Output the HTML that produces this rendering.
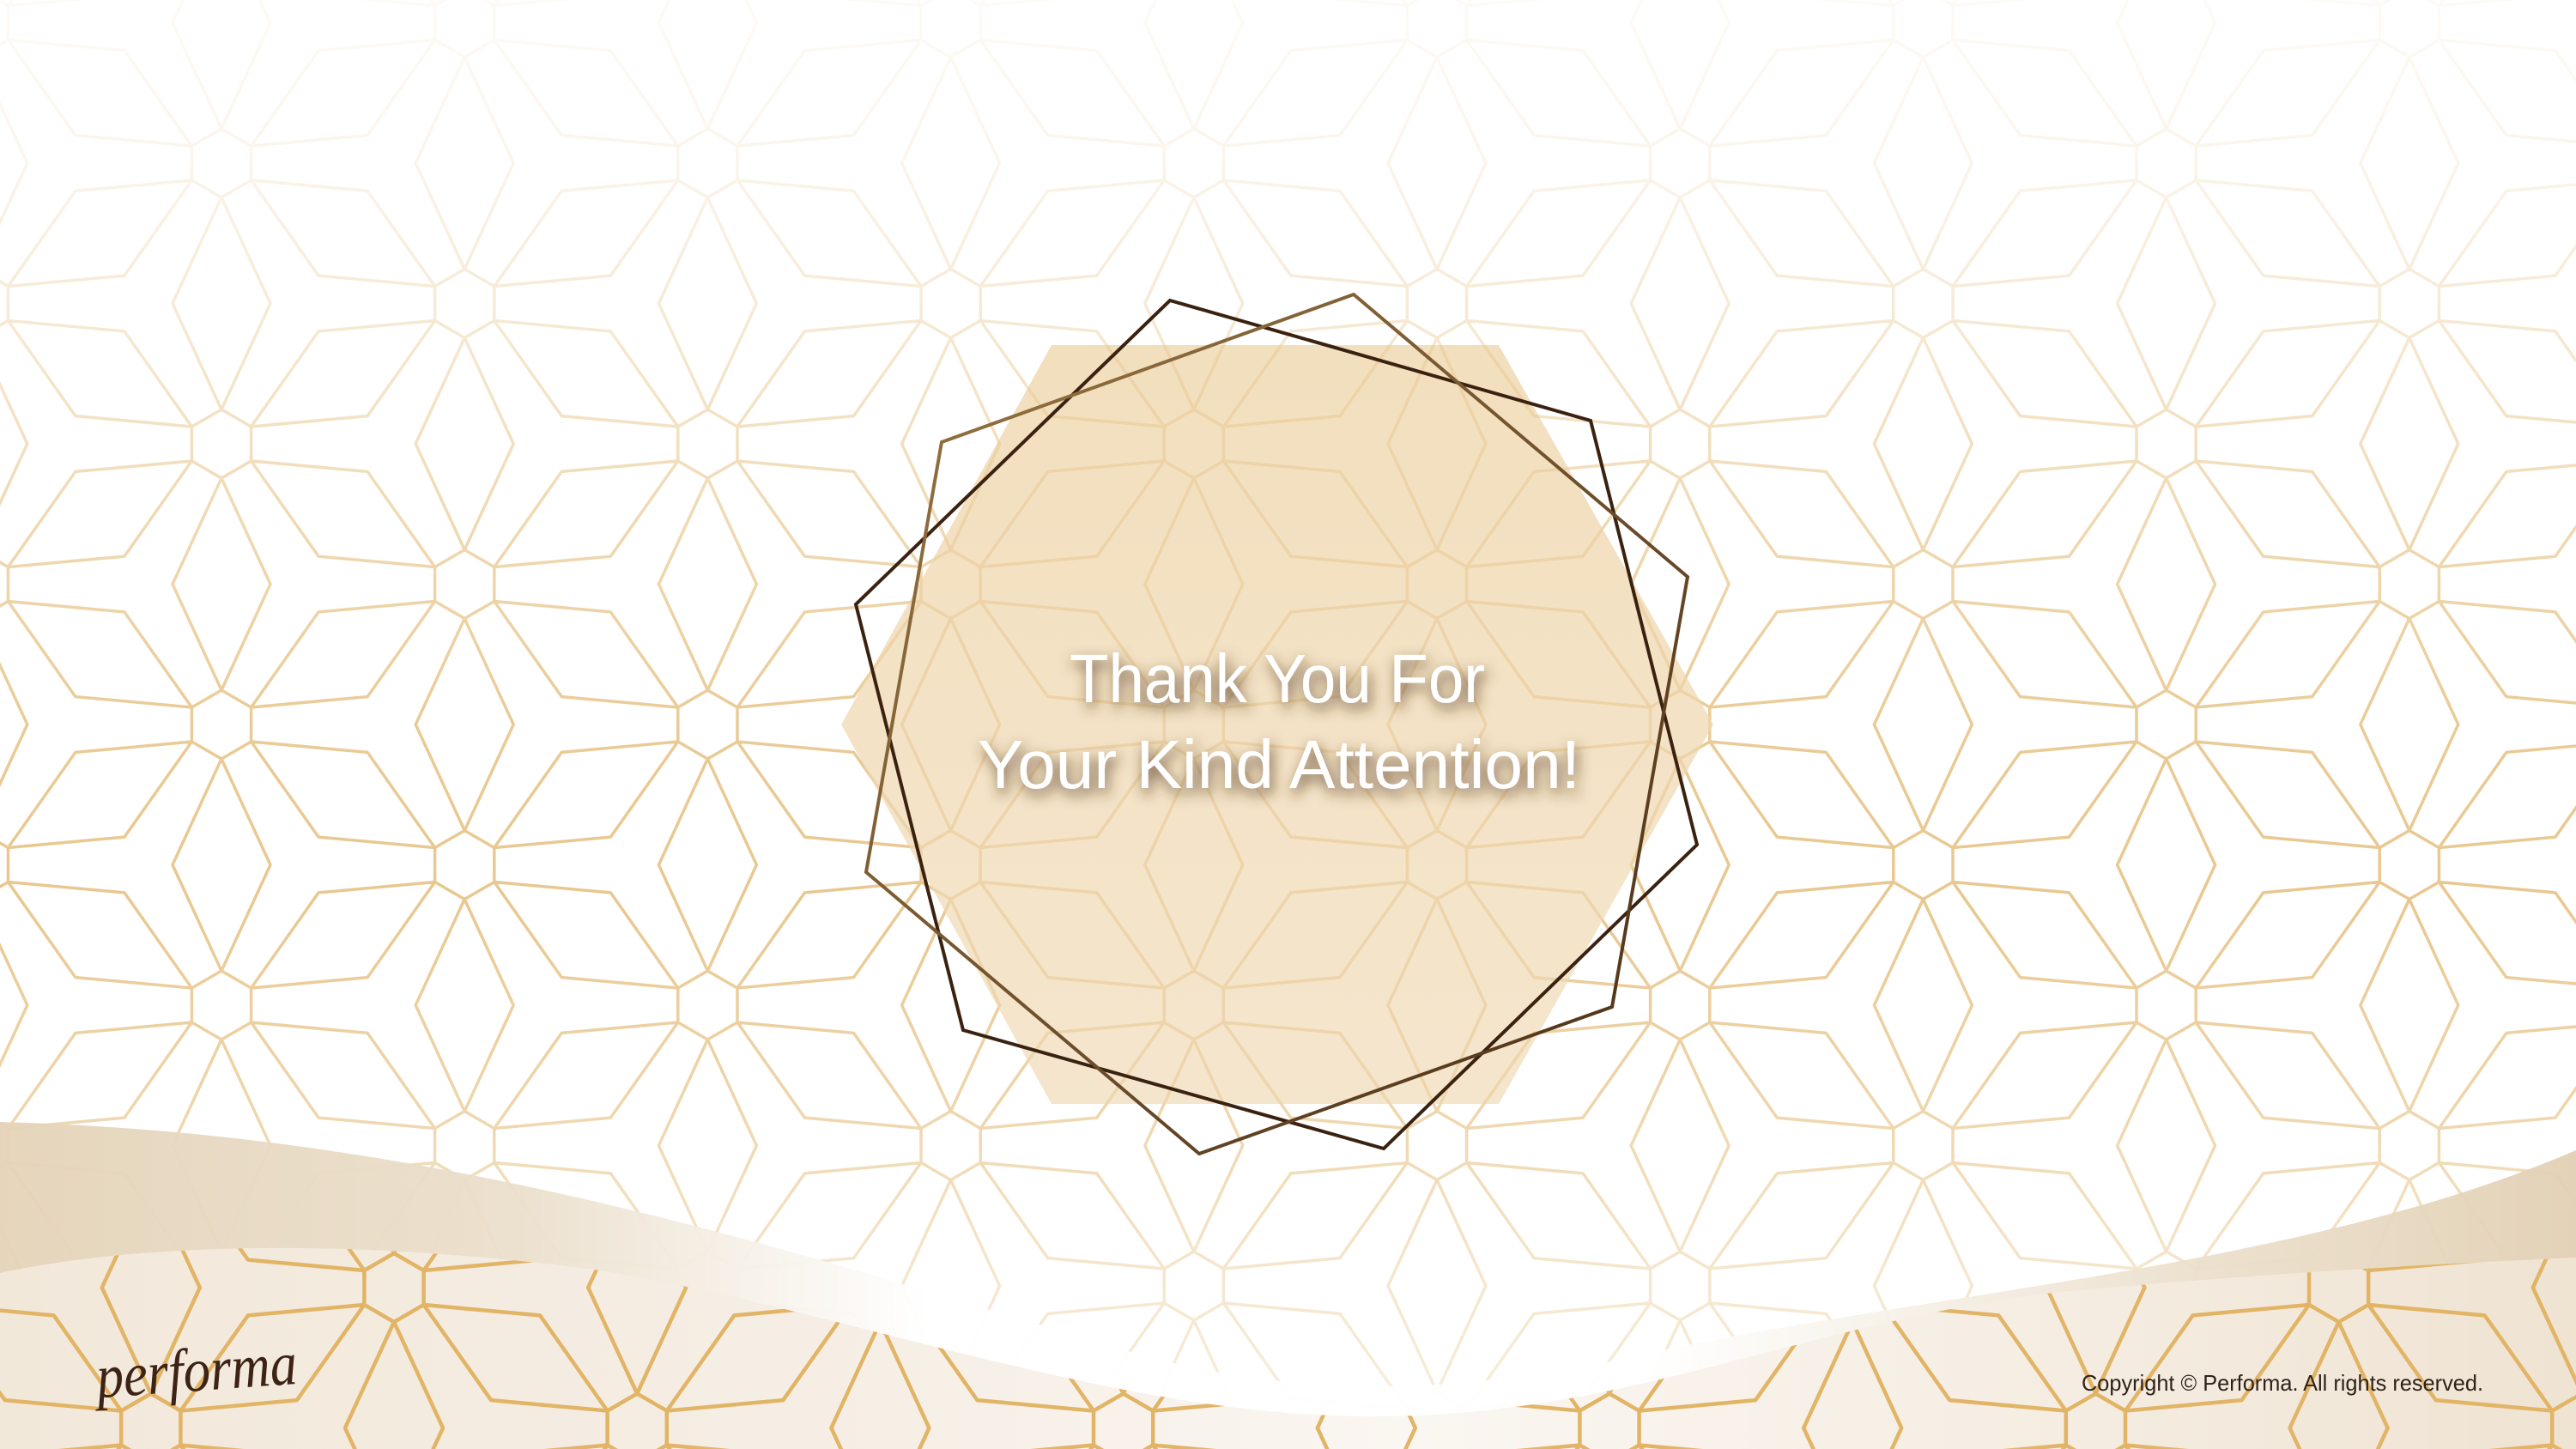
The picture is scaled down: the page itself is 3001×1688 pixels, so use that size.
<!DOCTYPE html>
<html><head><meta charset="utf-8">
<style>
html,body{margin:0;padding:0;background:#fff;overflow:hidden;width:3001px;height:1688px;}
body{position:relative;}
svg{position:absolute;left:0;top:0;display:block;}
</style></head>
<body>
<svg id="s" width="3001" height="1688" viewBox="0 0 3001 1688" xmlns="http://www.w3.org/2000/svg">
<defs>
  <linearGradient id="wv" x1="0" y1="0" x2="0" y2="1688" gradientUnits="userSpaceOnUse">
    <stop offset="0" stop-color="#fff" stop-opacity="0.93"/>
    <stop offset="0.1" stop-color="#fff" stop-opacity="0.85"/>
    <stop offset="0.22" stop-color="#fff" stop-opacity="0.65"/>
    <stop offset="0.35" stop-color="#fff" stop-opacity="0.4"/>
    <stop offset="0.5" stop-color="#fff" stop-opacity="0.15"/>
    <stop offset="0.62" stop-color="#fff" stop-opacity="0.1"/>
    <stop offset="0.75" stop-color="#fff" stop-opacity="0.3"/>
    <stop offset="0.88" stop-color="#fff" stop-opacity="0.6"/>
    <stop offset="1" stop-color="#fff" stop-opacity="0.75"/>
  </linearGradient>
  <linearGradient id="hexFill" x1="0" y1="0" x2="0" y2="1">
    <stop offset="0" stop-color="#f1dcb8" stop-opacity="0.92"/>
    <stop offset="1" stop-color="#f3e2c6" stop-opacity="0.88"/>
  </linearGradient>
  <linearGradient id="p2g" x1="0" y1="0" x2="1" y2="1">
    <stop offset="0" stop-color="#9a7744"/>
    <stop offset="1" stop-color="#4a2e16"/>
  </linearGradient>
  <linearGradient id="backG" x1="0" y1="0" x2="3001" y2="0" gradientUnits="userSpaceOnUse">
    <stop offset="0" stop-color="#e4d3b8"/>
    <stop offset="0.2" stop-color="#ebdfcc"/>
    <stop offset="0.36" stop-color="#ffffff"/>
    <stop offset="0.64" stop-color="#ffffff"/>
    <stop offset="0.85" stop-color="#ece0cd"/>
    <stop offset="1" stop-color="#e2d0b4"/>
  </linearGradient>
  <linearGradient id="frontG" x1="0" y1="0" x2="3001" y2="0" gradientUnits="userSpaceOnUse">
    <stop offset="0" stop-color="#f2e8da"/>
    <stop offset="0.35" stop-color="#f6efe6"/>
    <stop offset="0.55" stop-color="#faf6f1"/>
    <stop offset="0.8" stop-color="#f5ede2"/>
    <stop offset="1" stop-color="#efe3d2"/>
  </linearGradient>
  <clipPath id="frontClip"><path d="M0,1483 C150,1450 400,1440 700,1480 C1000,1530 1300,1650 1600,1650 C1900,1650 2100,1540 2400,1505 C2700,1478 2900,1470 3001,1465 L3001,1688 L0,1688 Z"/></clipPath>
  <clipPath id="hc"><polygon points="1225,402 1746,402 1996,844 1746,1286 1225,1286 980,844"/></clipPath>
  <filter id="tsh" x="-20%" y="-50%" width="140%" height="200%">
    <feGaussianBlur in="SourceAlpha" stdDeviation="8"/>
    <feOffset dx="3" dy="7" result="b"/>
    <feFlood flood-color="#4e3218" flood-opacity="0.85"/>
    <feComposite in2="b" operator="in"/>
    <feMerge><feMergeNode/><feMergeNode in="SourceGraphic"/></feMerge>
  </filter>
</defs>
<rect width="3001" height="1688" fill="#fff"/>
<path id="pat1" fill="none" stroke="#e6c284" stroke-width="3.5" stroke-linejoin="round"/>
<rect width="3001" height="1688" fill="url(#wv)"/>

<polygon points="1225,402 1746,402 1996,844 1746,1286 1225,1286 980,844" fill="url(#hexFill)"/>
<g clip-path="url(#hc)" opacity="0.3"><path id="pat1b" fill="none" stroke="#e3bd7c" stroke-width="3.5"/></g>

<polygon points="1363,350 1853,490 1977,984 1612,1338 1122,1200 997,704" fill="none" stroke="#3a2110" stroke-width="4"/>
<polygon points="1577,343 1966,672 1878,1173 1397,1344 1009,1016 1097,515" fill="none" stroke="url(#p2g)" stroke-width="4"/>

<g filter="url(#tsh)" font-family="'Liberation Sans',sans-serif" fill="#ffffff" text-anchor="middle">
  <text x="1488" y="818" font-size="80" textLength="484" lengthAdjust="spacingAndGlyphs">Thank You For</text>
  <text x="1490" y="918" font-size="80" textLength="702" lengthAdjust="spacingAndGlyphs">Your Kind Attention!</text>
</g>

<path d="M0,1307 C500,1320 900,1450 1300,1570 C1500,1630 1700,1630 1950,1570 C2300,1500 2700,1470 3001,1340 L3001,1688 L0,1688 Z" fill="url(#backG)" opacity="0.95"/>
<path d="M0,1483 C150,1450 400,1440 700,1480 C1000,1530 1300,1650 1600,1650 C1900,1650 2100,1540 2400,1505 C2700,1478 2900,1470 3001,1465 L3001,1688 L0,1688 Z" fill="url(#frontG)"/>
<g clip-path="url(#frontClip)"><path id="pat2" fill="none" stroke="#e2b466" stroke-width="4.5" stroke-linejoin="round"/></g>

<text x="113" y="1620" font-family="'Liberation Serif',serif" font-style="italic" font-size="72" fill="#3d2316" textLength="234" lengthAdjust="spacingAndGlyphs" transform="rotate(-4 230 1610)">performa</text>
<text x="2425" y="1620" font-family="'Liberation Sans',sans-serif" font-size="26" fill="#2e2218" textLength="468" lengthAdjust="spacingAndGlyphs">Copyright © Performa. All rights reserved.</text>
</svg>
<script>
function gen(ox,oy,dx,dy,R,hw){
  var d="";
  function f(n){return n.toFixed(1);}
  for(var i=-12;i<=14;i++){for(var j=-10;j<=16;j++){ if(((i+j)%2+2)%2)continue;
    var x=ox+dx*i,y=oy+dy*j;
    if(x<-400||x>3400||y<-400||y>2100)continue;
    var h="";
    for(var k=0;k<6;k++){var a=Math.PI/180*(90+60*k);h+=(k?"L":"M")+f(x+R*Math.cos(a))+","+f(y-R*Math.sin(a));}
    d+=h+"Z";
    var nb=[[0,2],[1,1],[1,-1]];
    for(var n=0;n<3;n++){
      var qx=ox+dx*(i+nb[n][0]),qy=oy+dy*(j+nb[n][1]);
      var L=Math.hypot(qx-x,qy-y),ux=(qx-x)/L,uy=(qy-y)/L,px=-uy,py=ux;
      var t1x=x+R*ux,t1y=y+R*uy,t2x=qx-R*ux,t2y=qy-R*uy,mx=(x+qx)/2,my=(y+qy)/2;
      d+="M"+f(t1x)+","+f(t1y)+"L"+f(mx+hw*px)+","+f(my+hw*py)+"L"+f(t2x)+","+f(t2y)+"L"+f(mx-hw*px)+","+f(my-hw*py)+"Z";
    }
  }}
  return d;
}
var p1=gen(258,517,283.2,163.5,40,57);
document.getElementById("pat1").setAttribute("d",p1);
document.getElementById("pat1b").setAttribute("d",p1);
document.getElementById("pat2").setAttribute("d",gen(459,1500,283.2,163.5,40,57));
</script>
</body></html>
